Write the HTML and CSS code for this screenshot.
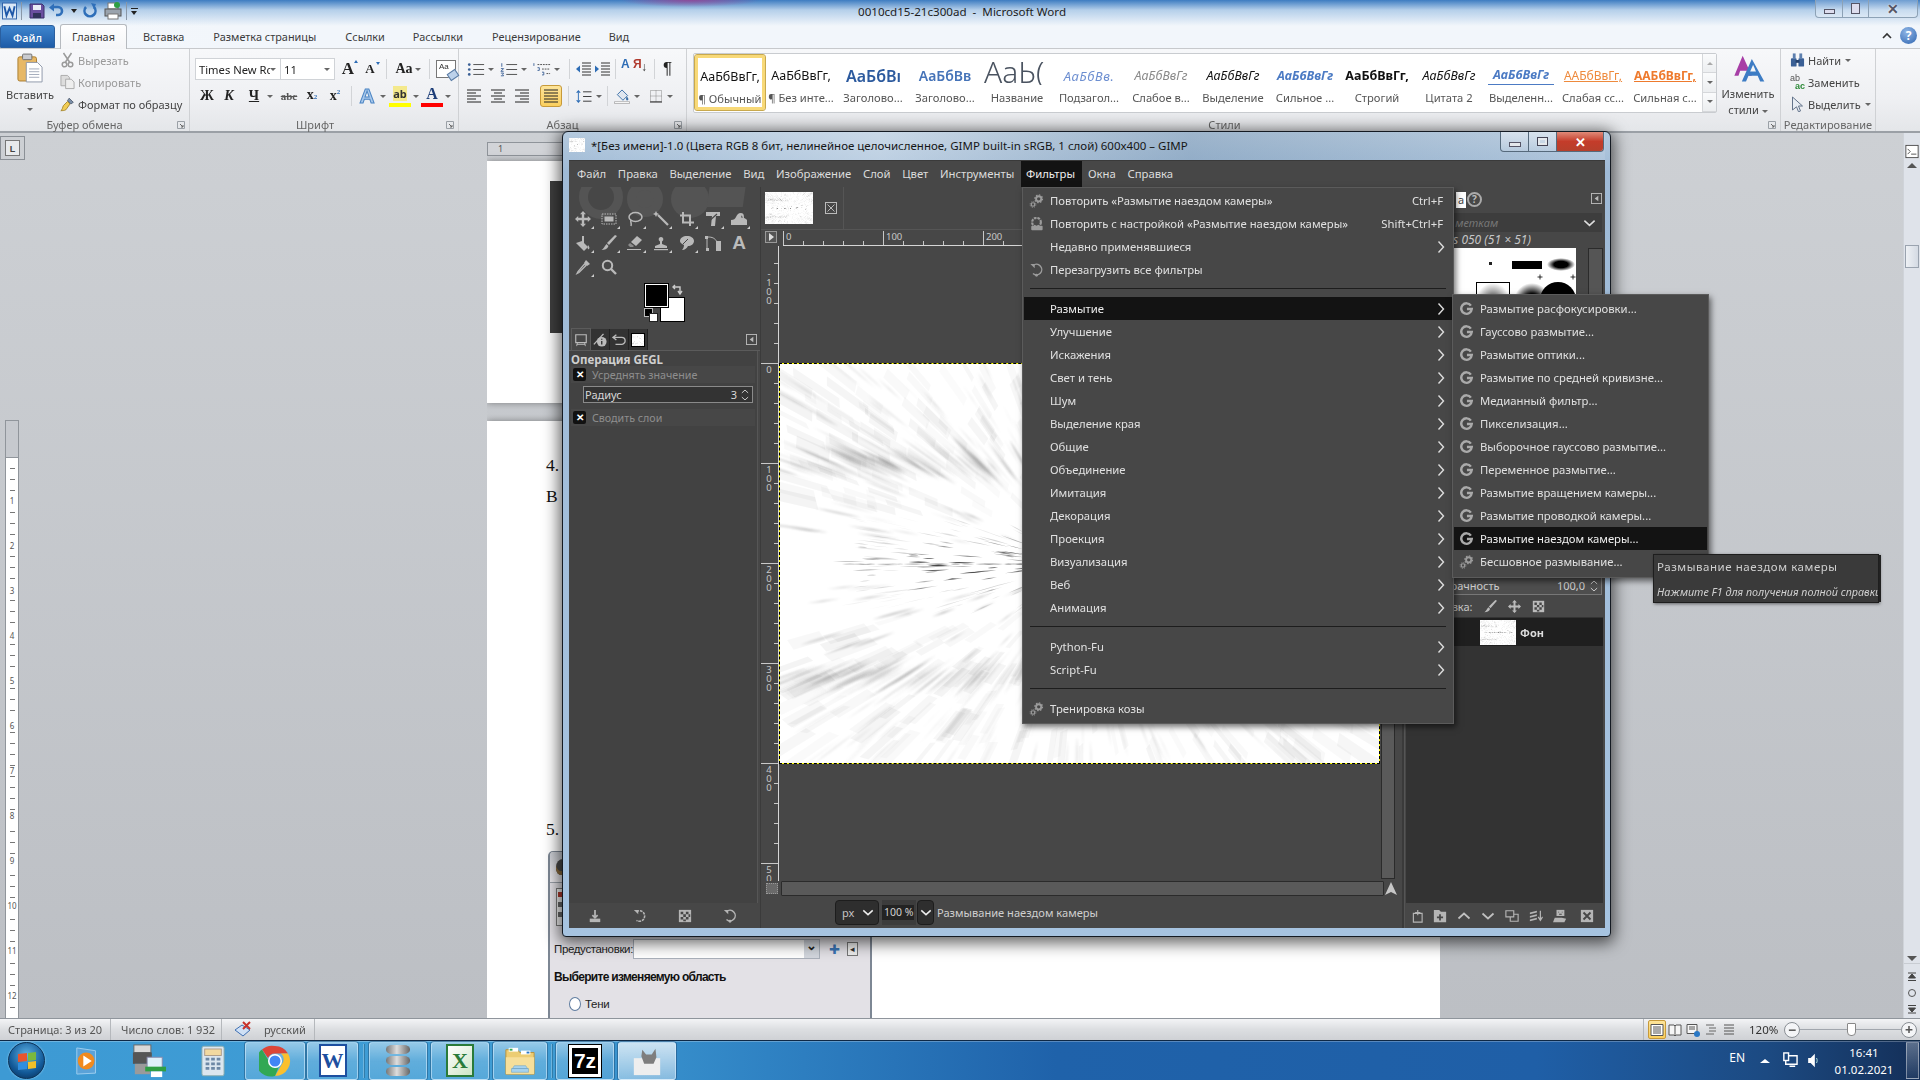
FILE: index.html
```html
<!DOCTYPE html>
<html lang="ru">
<head>
<meta charset="utf-8">
<title>GIMP поверх Microsoft Word</title>
<link rel="stylesheet" href="styles.css">
</head>
<body>
<svg class="defs" aria-hidden="true">
  <symbol id="i-move" viewBox="0 0 16 16"><path d="M8 0l3 3.2H9.2v3.6h3.6V5L16 8l-3.200 3V9.200H9.200v3.600H11L8 16l-3-3.200h1.800V9.200H3.200V11L0 8l3.200-3v1.800h3.600V3.200H5z"/></symbol>
  <symbol id="i-rect" viewBox="0 0 16 16"><rect x="1" y="3" width="14" height="10" fill="none" stroke="currentColor" stroke-dasharray="1.500 1"/><rect x="3.500" y="5.500" width="9" height="5"/></symbol>
  <symbol id="i-lasso" viewBox="0 0 16 16"><ellipse cx="8.500" cy="6" rx="6.500" ry="4.500" fill="none" stroke="currentColor" stroke-width="1.500"/><path d="M4 9c-1 2 1 3 0 6" fill="none" stroke="currentColor" stroke-width="1.500"/></symbol>
  <symbol id="i-wand" viewBox="0 0 16 16"><path d="M5 4l10 10" stroke="currentColor" stroke-width="2.200"/><path d="M3 0l1 2 2 1-2 1-1 2-1-2-2-1 2-1z"/></symbol>
  <symbol id="i-crop" viewBox="0 0 16 16"><path d="M4 1v10.500h11M1 4.500h10V15" fill="none" stroke="currentColor" stroke-width="2"/></symbol>
  <symbol id="i-trans" viewBox="0 0 16 16"><path d="M1 1h14v4h-4l-1 10H6L7 5H1z"/><path d="M2 12L12 3" stroke="#474747" stroke-width="1.200"/></symbol>
  <symbol id="i-warp" viewBox="0 0 16 16"><path d="M0 14V9c3 0 4-1 5-3s2-4 5-4 3 3 3 5c1 0 2 1 3 2v5z"/><path d="M10 5c1 0 1 1 1 2" stroke="#474747" fill="none"/></symbol>
  <symbol id="i-bucket" viewBox="0 0 16 16"><path d="M1 8l6-2 6 6-4 4z"/><path d="M7 1h2v7H7z"/><path d="M13 10c1 1 2 3 1 4s-2-1-1-4z"/></symbol>
  <symbol id="i-brush" viewBox="0 0 16 16"><path d="M14 0l2 1-8 9-2-2z"/><path d="M5.500 9l2 2c-1 3-4 4-7 4 2-1 3-4 5-6z"/></symbol>
  <symbol id="i-eraser" viewBox="0 0 16 16"><path d="M10 1l5 4-6 6-5-4z"/><path d="M3 8l4 3-1 1H3l-2-2z" opacity=".6"/><path d="M0 14h14v1H0z"/></symbol>
  <symbol id="i-clone" viewBox="0 0 16 16"><path d="M8 2a2.300 2.300 0 0 1 1 4.400V9l5 2v2H2v-2l5-2V6.400A2.300 2.300 0 0 1 8 2z"/><path d="M1 14h14v1.200H1z"/></symbol>
  <symbol id="i-heal" viewBox="0 0 16 16"><path d="M8 1c4 0 7 2 7 5s-3 5-6 5c-1 2-3 4-6 4 1-1 2-3 2-5C2 9 1 7 1 6c0-3 3-5 7-5z"/><path d="M4 9l5-5" stroke="#474747"/></symbol>
  <symbol id="i-path" viewBox="0 0 16 16"><rect x="0" y="1" width="3" height="3"/><rect x="1" y="13" width="3" height="3"/><rect x="11" y="6" width="5" height="10"/><path d="M2 4v9M3 2c4 0 7 1 9 5" fill="none" stroke="currentColor"/></symbol>
  <symbol id="i-picker" viewBox="0 0 16 16"><path d="M11 1l4 4-3 2-3-3z"/><path d="M9.500 5l1.500 1.500-7 7-2 1 1-2z" fill="none" stroke="currentColor" stroke-width="1.300"/></symbol>
  <symbol id="i-zoom" viewBox="0 0 16 16"><circle cx="6.500" cy="6.500" r="4.700" fill="none" stroke="currentColor" stroke-width="2"/><path d="M10 10l5 5" stroke="currentColor" stroke-width="2.400"/></symbol>
  <symbol id="i-g" viewBox="0 0 16 16"><path d="M13 4.200A6 6 0 1 0 14 8H8.500" fill="none" stroke="currentColor" stroke-width="2.800"/></symbol>
  <symbol id="i-gear" viewBox="0 0 16 16"><circle cx="10.500" cy="5.500" r="3" fill="none" stroke="currentColor" stroke-width="2.200"/><circle cx="10.500" cy="5.500" r="4.400" fill="none" stroke="currentColor" stroke-width="1.400" stroke-dasharray="1.700 1.700"/><circle cx="4" cy="12" r="2" fill="none" stroke="currentColor" stroke-width="1.400"/><circle cx="4" cy="12" r="3.300" fill="none" stroke="currentColor" stroke-width="1" stroke-dasharray="1.300 1.300"/></symbol>
  <symbol id="i-repeat" viewBox="0 0 16 16"><circle cx="8" cy="6" r="5" fill="none" stroke="currentColor" stroke-width="2.500" stroke-dasharray="3 1"/><rect x="2" y="10" width="13" height="5" rx="1"/></symbol>
  <symbol id="i-reload" viewBox="0 0 16 16"><path d="M4 3a6 6 0 1 1 0 9" fill="none" stroke="currentColor" stroke-width="1.700"/><path d="M1 1h5v5z"/><circle cx="8" cy="14" r="1.600"/></symbol>
  <symbol id="i-chev" viewBox="0 0 8 14"><path d="M1.500 1.500L6.500 7l-5 5.500" fill="none" stroke="currentColor" stroke-width="1.400"/></symbol>
  <symbol id="i-down" viewBox="0 0 14 8"><path d="M1.500 1.500L7 6.500l5.500-5" fill="none" stroke="currentColor" stroke-width="1.700"/></symbol>
  <symbol id="i-up" viewBox="0 0 14 8"><path d="M1.500 6.500L7 1.500l5.500 5" fill="none" stroke="currentColor" stroke-width="1.700"/></symbol>
  <symbol id="i-paste" viewBox="0 0 28 32"><rect x="1" y="4" width="20" height="26" rx="2" fill="#e7b866" stroke="#a87a2c"/><rect x="6" y="1" width="10" height="6" rx="1" fill="#c9cbd0" stroke="#6e6e6e"/><path d="M10 10h12l5 5v16H10z" fill="#fff" stroke="#8a94a6"/><path d="M13 17h11M13 20h11M13 23h11M13 26h11" stroke="#9fa8b8"/></symbol>
  <symbol id="i-sci" viewBox="0 0 14 16"><path d="M3 1l6 9M11 1L5 10" stroke="#9a9a9a" stroke-width="1.500"/><circle cx="4" cy="12.500" r="2.300" fill="none" stroke="#9a9a9a" stroke-width="1.500"/><circle cx="10" cy="12.500" r="2.300" fill="none" stroke="#9a9a9a" stroke-width="1.500"/></symbol>
  <symbol id="i-copy" viewBox="0 0 16 16"><path d="M1 1h7l2 2v9H1z" fill="#ddd" stroke="#aaa"/><path d="M6 5h6l3 3v7H6z" fill="#eee" stroke="#aaa"/></symbol>
  <symbol id="i-fmt" viewBox="0 0 18 18"><path d="M11 2l5 5-3 2-4-4z" fill="#7a8ea8" stroke="#4d5a6d"/><path d="M9 6l3 3-5 7c-2 1-4 1-6 1 2-1 2-4 3-6z" fill="#f0cc55" stroke="#a07e20"/></symbol>
  <symbol id="i-list" viewBox="0 0 20 16"><circle cx="2.500" cy="2.500" r="1.500" fill="#3a5f95"/><circle cx="2.500" cy="8" r="1.500" fill="#3a5f95"/><circle cx="2.500" cy="13.500" r="1.500" fill="#3a5f95"/><path d="M7 2.500h12M7 8h12M7 13.500h12" stroke="#444"/></symbol>
  <symbol id="i-num" viewBox="0 0 20 16"><path d="M2 1v4M1 7h3l-3 3h3M1 12h3l-1 1.500 1 1.500H1" stroke="#3a5f95" fill="none"/><path d="M7 2.500h12M7 8h12M7 13.500h12" stroke="#444"/></symbol>
  <symbol id="i-multi" viewBox="0 0 20 16"><path d="M1 1v3M5 6h2v3H5M10 11h2v3h-2" stroke="#3a5f95" fill="none"/><path d="M5 2.500h14M10 7.500h9M15 12.500h4" stroke="#444" stroke-dasharray="2 1"/></symbol>
  <symbol id="i-outd" viewBox="0 0 16 14"><path d="M7 1h9M7 4h9M7 7h9M7 10h9M7 13h9" stroke="#333"/><path d="M1 7l4-3.500v7z" fill="#2d6cb5"/></symbol>
  <symbol id="i-ind" viewBox="0 0 16 14"><path d="M7 1h9M7 4h9M7 7h9M7 10h9M7 13h9" stroke="#333"/><path d="M5 7L1 3.500v7z" fill="#2d6cb5"/></symbol>
  <symbol id="i-al" viewBox="0 0 16 14"><path d="M1 1h14M1 4h9M1 7h14M1 10h9M1 13h14" stroke="#222"/></symbol>
  <symbol id="i-ac" viewBox="0 0 16 14"><path d="M1 1h14M4 4h8M1 7h14M4 10h8M1 13h14" stroke="#222"/></symbol>
  <symbol id="i-ar" viewBox="0 0 16 14"><path d="M1 1h14M6 4h9M1 7h14M6 10h9M1 13h14" stroke="#222"/></symbol>
  <symbol id="i-aj" viewBox="0 0 16 14"><path d="M1 1h14M1 4h14M1 7h14M1 10h14M1 13h14" stroke="#222"/></symbol>
  <symbol id="i-spacing" viewBox="0 0 18 16"><path d="M3 1l2.500 3h-5zM3 15L.500 12h5z" fill="#2d6cb5"/><path d="M3 4v8" stroke="#2d6cb5"/><path d="M8 3h9M8 8h9M8 13h9" stroke="#333"/></symbol>
  <symbol id="i-shade" viewBox="0 0 18 16"><path d="M9 1l6 6-5 5-6-6z" fill="#dfe6ef" stroke="#3a6ea5"/><path d="M14 8c1 1 3 3 1 4s-2-2-1-4z" fill="#3a6ea5"/><path d="M1 13.500h16v2H1z" fill="#fff" stroke="#888" stroke-width=".6"/></symbol>
  <symbol id="i-border" viewBox="0 0 14 14"><path d="M1.500 1.500h11v11h-11zM7 1.500v11M1.500 7h11" fill="none" stroke="#888" stroke-dasharray="1 1"/><path d="M1 13h12" stroke="#222"/></symbol>
  <symbol id="i-launch" viewBox="0 0 8 8"><path d="M.500.500h7v7h-7z" fill="none" stroke="#9aa0a6"/><path d="M3 3l3 3M6 4v2H4" stroke="#666" fill="none"/></symbol>
  <symbol id="i-bino" viewBox="0 0 16 16"><rect x="1" y="6" width="6" height="9" rx="1" fill="#3a5f95"/><rect x="9" y="6" width="6" height="9" rx="1" fill="#3a5f95"/><rect x="3" y="1" width="3" height="6" fill="#5d7fae"/><rect x="10" y="1" width="3" height="6" fill="#5d7fae"/><path d="M6 8h4v3H6z" fill="#24416d"/></symbol>
  <symbol id="i-cursor" viewBox="0 0 12 16"><path d="M1 1l10 9H7l2 5-2 .8-2-5-4 3.200z" fill="#e8edf4" stroke="#64748b"/></symbol>
  <symbol id="i-aa" viewBox="0 0 36 36"><path d="M11 2L1 26h5l2-6h8l2 6h4z" fill="#a73ea6"/><path d="M22 6L10 33h5l3-7h11l3 7h5z" fill="#3d7cc4"/><path d="M20 21l3.500-8 3.500 8z" fill="#f3f5f7"/></symbol>
  <symbol id="i-grip" viewBox="0 0 16 16"><rect x="1" y="1" width="14" height="14" fill="#fff" stroke="#444"/><path d="M3 5l3 3-3 3M7 11h6" stroke="#444" fill="none"/></symbol>
  <symbol id="i-pin" viewBox="0 0 12 12"><rect x=".500" y=".500" width="11" height="11" fill="none" stroke="#bbb"/><path d="M8 3v6L4 6z" fill="#bbb"/></symbol>
  <symbol id="i-export" viewBox="0 0 16 16"><path d="M8 1v9M5 7l3 3 3-3" stroke="currentColor" fill="none" stroke-width="2"/><path d="M2 11h12v4H2z"/></symbol>
  <symbol id="i-undo" viewBox="0 0 16 16"><path d="M4 3a6 6 0 1 1 0 10" fill="none" stroke="currentColor" stroke-width="1.800" stroke-dasharray="3 1"/><path d="M1 1h5v5z"/></symbol>
  <symbol id="i-checker" viewBox="0 0 16 16"><path d="M1 1h14v14H1z"/><path d="M3 3h3v3H3zM9 3h3v3H9zM6 6h3v3H6zM12 6h2v3h-2zM3 9h3v3H3zM9 9h3v3H9zM6 12h3v2H6z" fill="#474747"/></symbol>
  <symbol id="i-new" viewBox="0 0 16 16"><path d="M5 5h10v10H5zM10 1v6M7 4h6" fill="none" stroke="currentColor" stroke-width="1.300"/></symbol>
  <symbol id="i-folder" viewBox="0 0 16 16"><path d="M1 1h6l2 2h6v12H1z"/><path d="M8 6v7M4.500 9.500h7" stroke="#474747" stroke-width="2"/></symbol>
  <symbol id="i-dup" viewBox="0 0 16 16"><path d="M1 2h9v7H1zM6 9v5h9V6h-5" fill="none" stroke="currentColor" stroke-width="1.300"/></symbol>
  <symbol id="i-merge" viewBox="0 0 16 16"><path d="M1 4l8-2v2l-8 2zM1 8l8-2v2l-8 2zM1 12l8-2v2l-8 2z"/><path d="M13 2v10M10.500 9l2.500 4 2.500-4" fill="none" stroke="currentColor" stroke-width="1.400"/></symbol>
  <symbol id="i-mask" viewBox="0 0 16 16"><path d="M4 1h9v7H4z"/><path d="M6 3h1v1H6zM10 3h1v1h-1zM7 5.500h3v1H7z" fill="#474747"/><path d="M2 10h8l5 1-2 4H0z"/></symbol>
  <symbol id="i-x" viewBox="0 0 16 16"><path d="M1 1h14v14H1z"/><path d="M4 4l8 8M12 4l-8 8" stroke="#474747" stroke-width="2.200"/></symbol>
  <symbol id="i-close" viewBox="0 0 12 12"><rect x=".500" y=".500" width="11" height="11" fill="none" stroke="#bbb"/><path d="M2.500 2.500l7 7M9.500 2.500l-7 7" stroke="#bbb"/></symbol>
  <symbol id="i-tv" viewBox="0 0 16 16"><path d="M2 2h12v9H2z" fill="none" stroke="currentColor" stroke-width="1.300"/><path d="M4 11l-1 4M12 11l1 4M3 13h10" stroke="currentColor"/></symbol>
  <symbol id="i-info" viewBox="0 0 16 16"><path d="M1 13L12 1" stroke="currentColor" stroke-width="1.500"/><circle cx="10" cy="10" r="5.500"/><path d="M10 6.500v1.300M10 9v4" stroke="#2e2e2e" stroke-width="1.500"/></symbol>
  <symbol id="i-hist" viewBox="0 0 16 16"><path d="M5 2L1 5l4 3M1 5h10c3 0 4 2 4 4s-2 4-4 4H4" fill="none" stroke="currentColor" stroke-width="1.500"/></symbol>
  <symbol id="i-star" viewBox="0 0 12 12"><path d="M6 1v10M1 6h10" stroke="#000" stroke-width="1.600"/></symbol>
  <symbol id="i-first" viewBox="0 0 10 10"><path d="M1 1h8M5 2L1.500 6h7zM1 8.500h8" stroke="#444" fill="#444"/></symbol>
  <symbol id="i-last" viewBox="0 0 10 10"><path d="M1 1.500h8M5 8L1.500 4h7zM1 9h8" stroke="#444" fill="#444"/></symbol>
</svg>

<div class="word">
  <header class="w-top">
    <div class="qat-row">
      <div class="qat">
        <svg class="qi qi-w" viewBox="0 0 16 18"><rect x=".5" y=".5" width="15" height="17" fill="#d9e7f6" stroke="#2a5fa8"/><path d="M2.500 4l2.300 10 3.200-8 3.200 8L13.500 4" fill="none" stroke="#1d57a8" stroke-width="2"/></svg>
        <i class="qsep"></i>
        <svg class="qi qi-save" viewBox="0 0 16 16"><path d="M1 1h12l2 2v12H1z" fill="#6a4fa0" stroke="#39306b"/><rect x="4" y="2" width="8" height="5" fill="#e9edf6"/><rect x="4" y="10" width="8" height="5" fill="#31335c"/></svg>
        <svg class="qi qi-undo" viewBox="0 0 16 16"><path d="M4 4h6a4 4 0 0 1 0 8H8" fill="none" stroke="#2f6fb9" stroke-width="2.600"/><path d="M1 4.500l5-4v8z" fill="#2f6fb9"/></svg>
        <span class="qarr"></span>
        <svg class="qi qi-redo" viewBox="0 0 16 16"><path d="M4 4a5.500 5.500 0 1 0 8 0" fill="none" stroke="#2f6fb9" stroke-width="2.600"/><path d="M9 0l5 1-2 5z" fill="#2f6fb9"/></svg>
        <svg class="qi qi-print" viewBox="0 0 18 18"><rect x="4" y="1" width="10" height="6" fill="#fff" stroke="#777"/><rect x="1" y="7" width="16" height="7" fill="#9aa3ad" stroke="#555"/><rect x="4" y="12" width="10" height="5" fill="#fff" stroke="#777"/><circle cx="13" cy="3" r="3" fill="#2f9e44"/></svg>
        <i class="qsep qsep-2"></i>
        <span class="qcustom"></span>
      </div>
      <div class="w-title">0010cd15-21c300ad&nbsp; - &nbsp;Microsoft Word</div>
      <div class="w-ctrl">
        <span class="wc wc-min"><i></i></span>
        <span class="wc wc-max"><i></i></span>
        <span class="wc wc-close">✕</span>
      </div>
    </div>
    <nav class="tabs">
      <span class="tab-file">Файл</span>
      <span class="tab-active">Главная</span>
      <span class="tab t1">Вставка</span>
      <span class="tab t2">Разметка страницы</span>
      <span class="tab t3">Ссылки</span>
      <span class="tab t4">Рассылки</span>
      <span class="tab t5">Рецензирование</span>
      <span class="tab t6">Вид</span>
      <span class="tab-right"><svg class="ribbon-up" viewBox="0 0 10 7"><path d="M1 6l4-4 4 4" fill="none" stroke="#333" stroke-width="1.600"/></svg><span class="help">?</span></span>
    </nav>
  </header>

  <section class="ribbon">
    <div class="rg rg-clip">
      <div class="rg-body clip-body">
        <div class="paste">
          <svg class="paste-i"><use href="#i-paste"/></svg>
          <span>Вставить</span>
          <b class="tri"></b>
        </div>
        <ul class="clip-list">
          <li class="dis"><svg class="ci"><use href="#i-sci"/></svg>Вырезать</li>
          <li class="dis"><svg class="ci"><use href="#i-copy"/></svg>Копировать</li>
          <li><svg class="ci"><use href="#i-fmt"/></svg>Формат по образцу</li>
        </ul>
      </div>
      <div class="rg-label lb-clip">Буфер обмена<svg class="launch"><use href="#i-launch"/></svg></div>
    </div>

    <div class="rg rg-font">
      <div class="rg-body two-rows">
        <div class="rrow font-r1">
          <div class="combo combo-font"><span>Times New Rc</span><b class="tri"></b></div>
          <div class="combo combo-size"><span>11</span><b class="tri"></b></div>
          <span class="fbtn big fb-grow">A<sup class="up-t"></sup></span>
          <span class="fbtn sm">A<sup class="dn-t"></sup></span>
          <i class="vs"></i>
          <span class="fbtn aa">Aa<b class="tri"></b></span>
          <i class="vs"></i>
          <span class="clr"><span class="clr-t">Aa</span><i class="clr-e"></i></span>
        </div>
        <div class="rrow font-r2">
          <span class="fs f-b">Ж</span>
          <span class="fs f-i">К</span>
          <span class="fs f-u">Ч</span><b class="tri"></b>
          <span class="fs f-st">abc</span>
          <span class="fs f-sb">x<small>2</small></span>
          <span class="fs f-sp">x<sup>2</sup></span>
          <i class="vs vs2"></i>
          <span class="fs f-eff">A</span><b class="tri"></b>
          <span class="fs f-hl"><em>ab</em></span><b class="tri"></b>
          <span class="fs f-col">A</span><b class="tri"></b>
        </div>
      </div>
      <div class="rg-label lb-font">Шрифт<svg class="launch"><use href="#i-launch"/></svg></div>
    </div>

    <div class="rg rg-para">
      <div class="rg-body two-rows">
        <div class="rrow para-r1">
          <svg class="ic17"><use href="#i-list"/></svg><b class="tri"></b>
          <svg class="ic17"><use href="#i-num"/></svg><b class="tri"></b>
          <svg class="ic17"><use href="#i-multi"/></svg><b class="tri"></b>
          <i class="vs"></i>
          <svg class="ic15"><use href="#i-outd"/></svg>
          <svg class="ic15"><use href="#i-ind"/></svg>
          <i class="vs"></i>
          <span class="sort"><em>А</em><em class="ya">Я</em><b>↓</b></span>
          <i class="vs"></i>
          <span class="pilcrow">¶</span>
        </div>
        <div class="rrow para-r2">
          <svg class="ic15"><use href="#i-al"/></svg>
          <svg class="ic15"><use href="#i-ac"/></svg>
          <svg class="ic15"><use href="#i-ar"/></svg>
          <span class="aj-on"><svg class="ic15"><use href="#i-aj"/></svg></span>
          <i class="vs"></i>
          <svg class="ic17"><use href="#i-spacing"/></svg><b class="tri"></b>
          <i class="vs vs3"></i>
          <svg class="ic17"><use href="#i-shade"/></svg><b class="tri"></b>
          <svg class="ic15"><use href="#i-border"/></svg><b class="tri"></b>
        </div>
      </div>
      <div class="rg-label lb-para">Абзац<svg class="launch"><use href="#i-launch"/></svg></div>
    </div>

    <div class="rg rg-styles">
      <div class="rg-body styles-body">
        <div class="gallery">
          <div class="st st-on"><span class="sv">АаБбВвГг,</span><span class="sl">¶ Обычный</span></div>
          <div class="st"><span class="sv">АаБбВвГг,</span><span class="sl">¶ Без инте...</span></div>
          <div class="st"><span class="sv sv-h1">АаБбВı</span><span class="sl">Заголово...</span></div>
          <div class="st"><span class="sv sv-h2">АаБбВв</span><span class="sl">Заголово...</span></div>
          <div class="st"><span class="sv sv-t">АаЬ(</span><span class="sl">Название</span></div>
          <div class="st"><span class="sv sv-sub">АаБбВв.</span><span class="sl">Подзагол...</span></div>
          <div class="st"><span class="sv sv-wk">АаБбВвГг</span><span class="sl">Слабое в...</span></div>
          <div class="st"><span class="sv sv-em">АаБбВвГг</span><span class="sl">Выделение</span></div>
          <div class="st"><span class="sv sv-str">АаБбВвГг</span><span class="sl">Сильное ...</span></div>
          <div class="st"><span class="sv sv-bold">АаБбВвГг,</span><span class="sl">Строгий</span></div>
          <div class="st"><span class="sv sv-em">АаБбВвГг</span><span class="sl">Цитата 2</span></div>
          <div class="st"><span class="sv sv-int">АаБбВвГг</span><span class="sl">Выделенн...</span></div>
          <div class="st"><span class="sv sv-ref">ААБбВвГг,</span><span class="sl">Слабая сс...</span></div>
          <div class="st"><span class="sv sv-ref2">ААБбВвГг,</span><span class="sl">Сильная с...</span></div>
          <div class="gscroll"><span><b class="tri tri-up"></b></span><span><b class="tri"></b></span><span><b class="tri tri-more"></b></span></div>
        </div>
        <div class="chg">
          <svg class="chg-i"><use href="#i-aa"/></svg>
          <span>Изменить</span>
          <span>стили <b class="tri"></b></span>
        </div>
      </div>
      <div class="rg-label rg-label-styles">Стили<svg class="launch"><use href="#i-launch"/></svg></div>
    </div>

    <div class="rg rg-edit">
      <div class="rg-body">
        <ul class="edit-list">
          <li><svg class="ci"><use href="#i-bino"/></svg>Найти <b class="tri"></b></li>
          <li><span class="abac"><em>ab</em><em class="ac">ac</em></span>Заменить</li>
          <li><svg class="ci"><use href="#i-cursor"/></svg>Выделить <b class="tri"></b></li>
        </ul>
      </div>
      <div class="rg-label">Редактирование</div>
    </div>
  </section>

  <main class="doc">
    <div class="doc-left">
      <div class="corner"><span>L</span></div>
      <div class="vruler-w">
        <div class="vr-gray"></div>
        <div class="vr-white">
          <span>1</span><span>2</span><span>3</span><span>4</span><span>5</span><span>6</span><span>7</span><span>8</span><span>9</span><span>10</span><span>11</span><span>12</span>
        </div>
      </div>
    </div>
    <div class="doc-pages">
      <div class="hruler-w"><span>1</span></div>
      <div class="page page1">
        <p class="letter clipped">В</p>
        <div class="doc-shot"></div>
      </div>
      <div class="page page2">
        <p class="letter">4.</p>
        <p class="letter">В</p>
        <p class="letter l5">5.</p>
        <div class="dlg">
          <div class="dlg-head"><span class="dlg-wilber"></span></div>
          <div class="dlg-tool"><i></i><i></i><i></i></div>
          <div class="dlg-row">
            <span class="dlg-lbl">Предустановки:</span>
            <span class="dlg-combo"><b>⌄</b></span>
            <span class="dlg-plus">✚</span>
            <span class="dlg-pin">◂</span>
          </div>
          <div class="dlg-h">Выберите изменяемую область</div>
          <div class="dlg-radio"><i></i>Тени</div>
        </div>
      </div>
    </div>
    <div class="doc-scroll">
      <svg class="ds-grip"><use href="#i-grip"/></svg>
      <b class="ds-up"></b>
      <div class="ds-track"><span class="ds-thumb"></span></div>
      <b class="ds-down"></b>
      <div class="ds-nav"><svg><use href="#i-first"/></svg><span class="ds-o"></span><svg><use href="#i-last"/></svg></div>
    </div>
  </main>

  <footer class="status">
    <span class="s1">Страница: 3 из 20</span>
    <span class="s2">Число слов: 1 932</span>
    <span class="s3"><svg class="proof" viewBox="0 0 18 18"><path d="M1 9l7-5 8 5-7 6z" fill="#cfe0f5" stroke="#3e6fb3"/><path d="M9 1l7 7M16 1L9 8" stroke="#c8322b" stroke-width="2"/></svg></span>
    <span class="s4">русский</span>
    <span class="s-right">
      <span class="vw vw-on"><svg class="vwi" viewBox="0 0 14 14"><path d="M1 1.500h12v11H1z" fill="#fff" stroke="#555"/><path d="M3 4h8M3 6h8M3 8h8M3 10h8" stroke="#555"/></svg></span>
      <span class="vw"><svg class="vwi" viewBox="0 0 14 14"><path d="M1 2h5l1 1 1-1h5v10H8l-1 1-1-1H1z" fill="#f6f6f6" stroke="#555"/><path d="M7 3v10" stroke="#555"/></svg></span>
      <span class="vw"><svg class="vwi" viewBox="0 0 14 14"><path d="M1 1.500h10v9H1z" fill="#f6f6f6" stroke="#555"/><path d="M3 4h6M3 6h6" stroke="#555"/><circle cx="11" cy="11" r="3" fill="#2a78c5"/></svg></span>
      <span class="vw"><svg class="vwi" viewBox="0 0 14 14"><path d="M2 2h8M5 5h7M5 8h7M2 11h8" stroke="#666"/></svg></span>
      <span class="vw"><svg class="vwi" viewBox="0 0 14 14"><path d="M2 2h10M2 5h10M2 8h10M2 11h10" stroke="#555"/></svg></span>
      <span class="zoom-pc">120%</span>
      <span class="zb">−</span>
      <span class="zslider"><i></i></span>
      <span class="zb">+</span>
    </span>
  </footer>

  <footer class="taskbar">
    <div class="orb"><span class="flag"><i></i><i></i><i></i><i></i></span></div>
    <svg class="tk tk-media" viewBox="0 0 30 34"><path d="M3 3l20 3v24L3 31z" fill="#5aa2d8" stroke="#9fd0f0"/><circle cx="13" cy="17" r="9" fill="#f08a1f"/><path d="M10 11l9 6-9 6z" fill="#fff"/></svg>
    <svg class="tk tk-print" viewBox="0 0 36 36"><rect x="2" y="1" width="18" height="8" fill="#d8d8d8" stroke="#666"/><rect x="1" y="9" width="20" height="12" fill="#555"/><rect x="3" y="21" width="16" height="11" fill="#9a9a9a"/><rect x="16" y="14" width="16" height="11" fill="#dff0fa" stroke="#88a"/><path d="M14 24h22v5H14z" fill="#2f9e44"/><rect x="20" y="29" width="12" height="6" fill="#fff"/></svg>
    <svg class="tk tk-calc" viewBox="0 0 26 34"><rect x="1" y="1" width="24" height="32" rx="2" fill="#dbe6ef" stroke="#8aa"/><rect x="4" y="4" width="18" height="7" fill="#f2d9a0" stroke="#a98"/><path d="M5 15h4M11 15h4M17 15h4M5 20h4M11 20h4M17 20h4M5 25h4M11 25h4M17 25h4" stroke="#6d88a5" stroke-width="3"/></svg>
    <div class="tbtn b-chrome"><svg class="tk-in" viewBox="0 0 32 32"><path d="M16 1a15 15 0 0 1 13 7.500H16A7.500 7.500 0 0 0 9 13L3 4.500A15 15 0 0 1 16 1z" fill="#dc4537"/><path d="M29 8.500A15 15 0 0 1 16 31l7-12a7.500 7.500 0 0 0-1-10.500z" fill="#fbc02d"/><path d="M3 4.500l6.500 11a7.500 7.500 0 0 0 10 7L16 31A15 15 0 0 1 3 4.500z" fill="#31a853"/><circle cx="16" cy="16" r="7" fill="#fff"/><circle cx="16" cy="16" r="5.500" fill="#4285f4"/></svg></div>
    <div class="tbtn b-word"><span class="doc-ico"><b>W</b></span></div>
    <i class="tgap"></i>
    <div class="tbtn b-db"><span class="cyl"><i></i><i></i><i></i></span></div>
    <div class="tbtn b-xl"><span class="doc-ico xl"><b>X</b></span></div>
    <div class="tbtn b-fold"><svg class="tk-in" viewBox="0 0 34 32"><path d="M2 4h12l3 3h15v23H2z" fill="#eccd73" stroke="#b8913a"/><rect x="5" y="2" width="10" height="4" fill="#fff"/><rect x="6" y="3" width="3" height="2" fill="#36a852"/><rect x="18" y="5" width="10" height="4" fill="#fff"/><rect x="24" y="6" width="3" height="2" fill="#2a78c5"/><path d="M2 12h30v18H2z" fill="#f6df9a"/><path d="M8 24h18v4H8zM11 21h12l2 3H9z" fill="#a6d3ee" stroke="#6da2c5" stroke-width=".6"/></svg></div>
    <i class="tgap tgap2"></i>
    <div class="tbtn b-7z"><span class="z7">7z</span></div>
    <div class="tbtn b-gimp"><svg class="tk-in" viewBox="0 0 34 32"><rect x="3" y="13" width="28" height="18" fill="#eee"/><path d="M12 4l4 5 6 0 4-6 1 9-3 7H14l-3-8z" fill="#7e7e7e"/></svg></div>
    <div class="tray">
      <span class="t-en">EN</span>
      <span class="t-arr"></span>
      <svg class="t-net" viewBox="0 0 18 18"><rect x="3" y="1" width="5" height="8" fill="none" stroke="#fff" stroke-width="1.500"/><path d="M8 4h9v9H5V9M9 15h6" fill="none" stroke="#fff" stroke-width="1.500"/></svg>
      <svg class="t-vol" viewBox="0 0 16 18"><path d="M1 6h3l5-5v16l-5-5H1z" fill="#fff"/><path d="M11 6c1 2 1 4 0 6" stroke="#cfe" fill="none"/></svg>
      <span class="t-clock"><b>16:41</b><b>01.02.2021</b></span>
      <span class="t-show"></span>
    </div>
  </footer>
</div>

<div class="gimp">
  <div class="g-title">
    <canvas class="thumb thumb-title" width="16" height="14"></canvas>
    <span class="g-title-t">*[Без имени]-1.0 (Цвета RGB 8 бит, нелинейное целочисленное, GIMP built-in sRGB, 1 слой) 600x400 – GIMP</span>
    <span class="g-ctrl"><span class="gc"><i class="gc-min"></i></span><span class="gc"><i class="gc-max"></i></span><span class="gc gc-x">✕</span></span>
  </div>
  <div class="g-inner">
    <div class="g-menubar">
      <span class="m1">Файл</span><span>Правка</span><span>Выделение</span><span>Вид</span><span>Изображение</span><span>Слой</span><span>Цвет</span><span>Инструменты</span><span class="m-on">Фильтры</span><span>Окна</span><span>Справка</span>
    </div>
    <div class="g-body">
      <aside class="g-left">
        <div class="toolbox">
          <div class="wilber"><i class="w1"></i><i class="w2"></i><i class="w3"></i><i class="w4"></i></div>
          <div class="tools">
            <span class="tool"><svg><use href="#i-move"/></svg></span>
            <span class="tool"><svg><use href="#i-rect"/></svg></span>
            <span class="tool"><svg><use href="#i-lasso"/></svg></span>
            <span class="tool"><svg><use href="#i-wand"/></svg></span>
            <span class="tool"><svg><use href="#i-crop"/></svg></span>
            <span class="tool"><svg><use href="#i-trans"/></svg></span>
            <span class="tool"><svg><use href="#i-warp"/></svg></span>
            <span class="tool"><svg><use href="#i-bucket"/></svg></span>
            <span class="tool"><svg><use href="#i-brush"/></svg></span>
            <span class="tool"><svg><use href="#i-eraser"/></svg></span>
            <span class="tool"><svg><use href="#i-clone"/></svg></span>
            <span class="tool"><svg><use href="#i-heal"/></svg></span>
            <span class="tool notri"><svg><use href="#i-path"/></svg></span>
            <span class="tool notri tool-a">A</span>
            <span class="tool"><svg><use href="#i-picker"/></svg></span>
            <span class="tool notri"><svg><use href="#i-zoom"/></svg></span>
          </div>
          <div class="swatches">
            <i class="sw-bg"></i><i class="sw-fg"></i><i class="sw-d1"></i><i class="sw-d2"></i>
            <svg class="sw-swap" viewBox="0 0 12 12"><path d="M1 3h7v6M6 7l2 3 2-3M3 1L1 3l2 2" fill="none" stroke="#ccc" stroke-width="1.400"/></svg>
          </div>
        </div>
        <div class="dock-tabs">
          <span class="dt dt-on"><svg><use href="#i-tv"/></svg></span>
          <span class="dt"><svg><use href="#i-info"/></svg></span>
          <span class="dt"><svg><use href="#i-hist"/></svg></span>
          <span class="dt"><canvas class="thumb thumb-tab" width="12" height="12"></canvas></span>
          <svg class="dt-pin"><use href="#i-pin"/></svg>
        </div>
        <div class="gegl">
          <div class="gegl-h">Операция GEGL</div>
          <div class="gegl-chk"><i>✕</i>Усреднять значение</div>
          <div class="gegl-field"><span>Радиус</span><span class="gv">3</span><span class="spin"><svg><use href="#i-up"/></svg><svg><use href="#i-down"/></svg></span></div>
          <div class="gegl-chk gc2"><i>✕</i>Сводить слои</div>
        </div>
        <div class="dock-foot df-left">
          <svg><use href="#i-export"/></svg><svg><use href="#i-undo"/></svg><svg><use href="#i-checker"/></svg><svg><use href="#i-reload"/></svg>
        </div>
      </aside>

      <section class="g-center">
        <div class="img-tabs">
          <div class="img-tab"><canvas class="thumb thumb-img" width="48" height="32"></canvas><svg class="img-x"><use href="#i-close"/></svg></div>
        </div>
        <div class="hruler">
          <span class="origin"></span>
          <div class="hr-cells"><span>0</span><span>100</span><span>200</span><span>300</span><span>400</span><span>500</span><span>600</span></div>
        </div>
        <div class="mid">
          <div class="vruler">
            <div class="vr-cell vr-neg"><span>-</span><span>1</span><span>0</span><span>0</span></div>
            <div class="vr-cell"><span>0</span></div>
            <div class="vr-cell"><span>1</span><span>0</span><span>0</span></div>
            <div class="vr-cell"><span>2</span><span>0</span><span>0</span></div>
            <div class="vr-cell"><span>3</span><span>0</span><span>0</span></div>
            <div class="vr-cell"><span>4</span><span>0</span><span>0</span></div>
            <div class="vr-cell vr-end"><span>5</span><span>0</span></div>
          </div>
          <div class="viewport"><div class="ants"><canvas id="blur" width="600" height="400"></canvas></div></div>
          <div class="vbar"></div>
        </div>
        <div class="hbar"><i class="corner-q"></i><span class="hbar-t"></span><svg class="nav-tri" viewBox="0 0 12 13"><path d="M6 0l6 13-6-3-6 3z"/></svg></div>
        <div class="g-status">
          <span class="cb cb-px">px<svg><use href="#i-down"/></svg></span>
          <span class="cb-zoom"><b>100 %</b></span>
          <span class="cb cb-z"><svg><use href="#i-down"/></svg></span>
          <span class="g-msg">Размывание наездом камеры</span>
        </div>
      </section>

      <aside class="g-right">
        <div class="rd-tabs"><span class="rd-tab">а</span><span class="rd-help">?</span><svg class="dt-pin"><use href="#i-pin"/></svg></div>
        <div class="rd-filter"><em>по меткам</em><svg><use href="#i-down"/></svg></div>
        <div class="rd-name"><em>Gauss 050 (51 × 51)</em></div>
        <div class="rd-brushes">
          <div class="brush-grid">
            <i class="br-dot"></i><i class="br-bar"></i><i class="br-ell"></i>
            <i class="br-sel"></i><i class="br-mid"></i><i class="br-big"></i>
            <svg class="br-p1"><use href="#i-star"/></svg><svg class="br-p2"><use href="#i-star"/></svg>
          </div>
          <div class="brush-sb"></div>
        </div>
        <div class="rd-op"><div class="op-bar"><span>Непрозрачность</span><span class="op-v">100,0</span><span class="spin"><svg><use href="#i-up"/></svg><svg><use href="#i-down"/></svg></span></div></div>
        <div class="rd-lock"><span>Блокировка:</span><svg><use href="#i-brush"/></svg><svg><use href="#i-move"/></svg><svg><use href="#i-checker"/></svg></div>
        <div class="rd-layers">
          <div class="layer"><canvas class="thumb thumb-layer" width="36" height="25"></canvas><b>Фон</b></div>
        </div>
        <div class="dock-foot df-right">
          <svg><use href="#i-new"/></svg><svg><use href="#i-folder"/></svg><svg class="f-ch"><use href="#i-up"/></svg><svg class="f-ch"><use href="#i-down"/></svg><svg><use href="#i-dup"/></svg><svg><use href="#i-merge"/></svg><svg><use href="#i-mask"/></svg><svg class="f-x"><use href="#i-x"/></svg>
        </div>
      </aside>
    </div>
  </div>
</div>

<div class="menu menu-main">
  <div class="mi"><svg class="mic"><use href="#i-gear"/></svg><span>Повторить «Размытие наездом камеры»</span><kbd>Ctrl+F</kbd></div>
  <div class="mi"><svg class="mic"><use href="#i-repeat"/></svg><span>Повторить с настройкой «Размытие наездом камеры»</span><kbd>Shift+Ctrl+F</kbd></div>
  <div class="mi sub"><i class="mic"></i><span>Недавно применявшиеся</span><svg class="chev"><use href="#i-chev"/></svg></div>
  <div class="mi"><svg class="mic"><use href="#i-reload"/></svg><span>Перезагрузить все фильтры</span></div>
  <hr class="ms ms1">
  <div class="mi sub mi-on"><i class="mic"></i><span>Размытие</span><svg class="chev"><use href="#i-chev"/></svg></div>
  <div class="mi sub"><i class="mic"></i><span>Улучшение</span><svg class="chev"><use href="#i-chev"/></svg></div>
  <div class="mi sub"><i class="mic"></i><span>Искажения</span><svg class="chev"><use href="#i-chev"/></svg></div>
  <div class="mi sub"><i class="mic"></i><span>Свет и тень</span><svg class="chev"><use href="#i-chev"/></svg></div>
  <div class="mi sub"><i class="mic"></i><span>Шум</span><svg class="chev"><use href="#i-chev"/></svg></div>
  <div class="mi sub"><i class="mic"></i><span>Выделение края</span><svg class="chev"><use href="#i-chev"/></svg></div>
  <div class="mi sub"><i class="mic"></i><span>Общие</span><svg class="chev"><use href="#i-chev"/></svg></div>
  <div class="mi sub"><i class="mic"></i><span>Объединение</span><svg class="chev"><use href="#i-chev"/></svg></div>
  <div class="mi sub"><i class="mic"></i><span>Имитация</span><svg class="chev"><use href="#i-chev"/></svg></div>
  <div class="mi sub"><i class="mic"></i><span>Декорация</span><svg class="chev"><use href="#i-chev"/></svg></div>
  <div class="mi sub"><i class="mic"></i><span>Проекция</span><svg class="chev"><use href="#i-chev"/></svg></div>
  <div class="mi sub"><i class="mic"></i><span>Визуализация</span><svg class="chev"><use href="#i-chev"/></svg></div>
  <div class="mi sub"><i class="mic"></i><span>Веб</span><svg class="chev"><use href="#i-chev"/></svg></div>
  <div class="mi sub"><i class="mic"></i><span>Анимация</span><svg class="chev"><use href="#i-chev"/></svg></div>
  <hr class="ms">
  <div class="mi sub"><i class="mic"></i><span>Python-Fu</span><svg class="chev"><use href="#i-chev"/></svg></div>
  <div class="mi sub"><i class="mic"></i><span>Script-Fu</span><svg class="chev"><use href="#i-chev"/></svg></div>
  <hr class="ms">
  <div class="mi"><svg class="mic"><use href="#i-gear"/></svg><span>Тренировка козы</span></div>
</div>

<div class="menu menu-sub">
  <div class="mi"><svg class="mic mic-g"><use href="#i-g"/></svg><span>Размытие расфокусировки...</span></div>
  <div class="mi"><svg class="mic mic-g"><use href="#i-g"/></svg><span>Гауссово размытие...</span></div>
  <div class="mi"><svg class="mic mic-g"><use href="#i-g"/></svg><span>Размытие оптики...</span></div>
  <div class="mi"><svg class="mic mic-g"><use href="#i-g"/></svg><span>Размытие по средней кривизне...</span></div>
  <div class="mi"><svg class="mic mic-g"><use href="#i-g"/></svg><span>Медианный фильтр...</span></div>
  <div class="mi"><svg class="mic mic-g"><use href="#i-g"/></svg><span>Пикселизация...</span></div>
  <div class="mi"><svg class="mic mic-g"><use href="#i-g"/></svg><span>Выборочное гауссово размытие...</span></div>
  <div class="mi"><svg class="mic mic-g"><use href="#i-g"/></svg><span>Переменное размытие...</span></div>
  <div class="mi"><svg class="mic mic-g"><use href="#i-g"/></svg><span>Размытие вращением камеры...</span></div>
  <div class="mi"><svg class="mic mic-g"><use href="#i-g"/></svg><span>Размытие проводкой камеры...</span></div>
  <div class="mi mi-on"><svg class="mic mic-g"><use href="#i-g"/></svg><span>Размытие наездом камеры...</span></div>
  <div class="mi"><svg class="mic"><use href="#i-gear"/></svg><span>Бесшовное размывание...</span></div>
</div>

<div class="tip">
  <div class="tip-a">Размывание наездом камеры</div>
  <div class="tip-b">Нажмите F1 для получения полной справки</div>
</div>
<script src="script.js"></script>
</body>
</html>
```
FILE: styles.css
```css
*{box-sizing:border-box}
html,body{margin:0;padding:0}
body{width:1920px;height:1080px;overflow:hidden;position:relative;font-family:"Noto Sans","Open Sans",sans-serif;font-size:11px;color:#333;background:#c5c8cd}
.defs{position:absolute;width:0;height:0;overflow:hidden}
ul{list-style:none;margin:0;padding:0}
p{margin:0}
.tool svg,.dock-foot svg,.dt svg,.rd-lock svg,.mic,.spin svg,.cb svg{fill:currentColor}

/* ---------- Word ---------- */
.word{display:flex;flex-direction:column;width:1920px;height:1080px}
.w-top{height:48px;flex:none;background:radial-gradient(70px 7px at 690px 0,rgba(168,58,140,.75),rgba(168,58,140,0)),linear-gradient(180deg,rgba(52,118,190,.95) 0,rgba(130,175,220,.55) 10px,rgba(255,255,255,0) 26px),linear-gradient(90deg,#f4f8fc 0,rgba(244,248,252,0) 12%),#f2f6fb}
.qat-row{height:24px;display:flex;align-items:flex-start;position:relative}
.qat{display:flex;align-items:center;height:22px;width:858px;padding-left:2px;flex:none}
.qi{height:16px;width:16px;flex:none}
.qi-w{height:18px;width:15px}
.qsep{width:1px;height:18px;background:#8a98a8;margin:0 0 0 4px}
.qi-save{margin-left:7px}
.qi-undo{margin-left:3px}
.qarr{width:0;height:0;border:3px solid transparent;border-top:4px solid #222;border-bottom:0;margin-left:7px}
.qi-redo{margin-left:5px}
.qi-print{margin-left:6px;width:18px;height:18px}
.qsep-2{margin-left:4px}
.qcustom{width:7px;height:7px;margin-left:4px;border-top:1px solid #222;position:relative}
.qcustom::after{content:"";position:absolute;left:0;top:2px;border:3.500px solid transparent;border-top:4px solid #222;border-bottom:0}
.w-title{font-size:11.600px;color:#1c1c1c;height:24px;line-height:24px;white-space:nowrap}
.w-ctrl{display:flex;margin-left:auto;height:18px;margin-right:2px;border:1px solid #8da2b6;border-top:0;border-radius:0 0 4px 4px;background:rgba(255,255,255,.25)}
.wc{display:flex;align-items:center;justify-content:center;border-right:1px solid #8da2b6;height:100%}
.wc-min{width:27px}.wc-max{width:26px}
.wc-close{width:48px;border:0;font-size:14px;font-weight:700;color:#556;text-shadow:0 0 2px #fff}
.wc-min i{width:11px;height:5px;border:1px solid #556;background:#dde;margin-top:5px}
.wc-max i{width:9px;height:11px;border:1px solid #556;background:#dde}
.tabs{display:flex;height:24px;align-items:center;font-size:10.900px;color:#3b3b3b;position:relative}
.tab-file{width:55px;height:23px;background:linear-gradient(#3f86cf,#1e5ca8);border-radius:3px 3px 0 0;color:#fff;text-align:center;line-height:23px;border:1px solid #2a5f9f;font-weight:500}
.tab-active{width:67px;height:25px;margin-left:5px;margin-top:1px;background:linear-gradient(#fff,#f4f5f7);border:1px solid #b6babf;border-bottom:0;border-radius:3px 3px 0 0;text-align:center;line-height:23px;position:relative;z-index:1}
.tab{white-space:nowrap}
.t1{margin-left:16px}.t2{margin-left:29px}.t3{margin-left:29px}.t4{margin-left:28px}.t5{margin-left:29px}.t6{margin-left:28px}
.tab-right{margin-left:auto;display:flex;align-items:center;gap:8px;margin-right:3px;margin-top:-1px}
.ribbon-up{width:10px;height:7px}
.help{width:17px;height:17px;border-radius:50%;background:radial-gradient(circle at 40% 30%,#8fb6e6,#2e64b0);color:#fff;font-weight:700;font-size:12px;text-align:center;line-height:17px}

.ribbon{display:flex;height:85px;flex:none;background:linear-gradient(#f7f8fa,#eff0f3 60%,#e4e6e9);border-top:1px solid #c7c9cc;border-bottom:2px solid #9ba0a6;filter:blur(.25px)}
.rg{display:flex;flex-direction:column;border-right:1px solid #cfd1d4;flex:none}
.rg-body{height:69px;flex:none}
.rg-label{height:15px;line-height:13px;font-size:11px;color:#666;text-align:center;position:relative;white-space:nowrap}
.lb-clip{padding-right:20px}.lb-font{padding-right:18px}.lb-para{padding-right:20px}
.launch{position:absolute;right:4px;top:3px;width:8px;height:8px}
.rg-clip{width:190px}.rg-font{width:269px}.rg-para{width:228px}.rg-styles{width:1094px}.rg-edit{width:95px}
.tri{display:inline-block;width:0;height:0;border:3px solid transparent;border-top:3.500px solid #666;border-bottom:0;flex:none}
.clip-body{display:flex}
.paste{width:60px;display:flex;flex-direction:column;align-items:center;padding-top:4px;font-size:11px;color:#444;flex:none}
.paste-i{width:26px;height:30px;margin-left:-1px;margin-bottom:4px}
.paste .tri{margin-top:6px}
.clip-list{padding-top:0}
.clip-list li,.edit-list li{display:flex;align-items:center;height:22px;white-space:nowrap;font-size:11px;color:#444}
.clip-list li.dis{color:#9a9a9a}
.ci{width:15px;height:16px;margin-right:3px;flex:none}
.two-rows{display:flex;flex-direction:column;padding:9px 0 0 5px}
.rrow{display:flex;align-items:center;height:22px;flex:none}
.font-r2{margin-top:5px;padding-left:1px}
.combo{height:22px;background:#fff;border:1px solid #d0d3d7;display:flex;align-items:center;font-size:11.200px;color:#222;padding-left:3px;justify-content:space-between;padding-right:4px;white-space:nowrap;overflow:hidden}
.combo span{overflow:hidden}
.combo-font{width:86px}
.combo-size{width:55px;margin-left:-1px}
.fbtn{font-family:"Liberation Serif",serif;font-weight:700;color:#222;width:22px;text-align:center;position:relative}
.fbtn.big{font-size:17px}
.fbtn.fb-grow{margin-left:2px}
.fbtn.sm{font-size:13px}
.up-t,.dn-t{position:absolute;right:1px;top:1px;border:2.500px solid transparent;border-bottom:3px solid #2d6cb5;border-top:0}
.dn-t{border-bottom:0;border-top:3px solid #2d6cb5}
.fbtn.aa{font-size:14px;width:32px}
.fbtn .tri{margin-left:2px;vertical-align:middle}
.vs{width:1px;height:20px;background:#d2d4d7;margin:0 5px;flex:none}
.clr{width:20px;height:18px;position:relative;margin-left:1px;border:1px solid #777;background:#fff;font:8px/12px "Liberation Sans",sans-serif;color:#333;padding-left:2px;flex:none}
.clr-e{position:absolute;right:-3px;bottom:-2px;width:10px;height:8px;background:#bcd1ea;border:1px solid #5a7ba3;transform:rotate(-35deg)}
.fs{width:22px;text-align:center;font-family:"Liberation Serif",serif;font-size:14px;font-weight:700;color:#222;flex:none;display:block;line-height:18px}
.fs small{font-size:7px;color:#2d6cb5}
.fs sup{font-size:7px;color:#2d6cb5;line-height:0}
.f-i{font-style:italic}
.f-u{text-decoration:underline;margin-left:3px}
.f-st{font-size:11px;text-decoration:line-through;margin-left:3px;color:#555}
.f-sb,.f-sp{margin-left:1px}
.font-r2 .tri{margin:0 2px}
.f-eff{font-family:"Liberation Sans",sans-serif;color:#a9c9ec;font-size:21px;-webkit-text-stroke:1px #4d86c4;margin-left:0;line-height:22px}
.vs2{margin:0 4px 0 5px}
.f-hl{height:21px;border-bottom:4px solid #ffff00;margin-left:1px;font-size:11px;line-height:15px}
.f-hl em{font-family:"Noto Sans",sans-serif;font-style:normal;color:#333;background:#f4e98c}
.f-col{height:21px;border-bottom:4px solid #f00;font-size:16px;line-height:16px;color:#1c3d78}
.ic17{width:18px;height:15px;flex:none}
.ic15{width:16px;height:14px;flex:none}
.para-r1 .tri{margin:0 4px 0 3px}
.para-r1 .tri + .ic17{margin-left:2px}
.para-r1{padding-left:3px}
.para-r1 .ic15 + .ic15{margin-left:3px}
.sort{width:28px;font-size:12px;display:flex;flex-wrap:wrap;font-family:"Liberation Sans",sans-serif;line-height:10px;position:relative;height:20px;flex:none}
.sort em{font-style:normal;font-weight:700;color:#2d6cb5;width:12px}
.sort .ya{color:#b03a2e;order:2}
.sort b{position:absolute;right:2px;top:3px}
.pilcrow{font-size:17px;color:#222;font-weight:400;font-family:"Liberation Sans",sans-serif;margin-left:3px}
.para-r2{margin-top:5px;padding-left:2px;gap:8px}
.para-r2 .tri{margin:0 0 0 -5px}
.para-r2 .vs{margin:0 -2px}
.aj-on{width:22px;height:22px;background:linear-gradient(#fde49a,#fbcf5d);border:1px solid #c79a3a;border-radius:3px;display:flex;align-items:center;justify-content:center;margin-left:2px}
.para-r2 .vs3{margin:0 -3px}

.styles-body{display:flex;padding:4px 0 0 6px}
.gallery{display:flex;width:1024px;height:60px;background:#fff;border:1px solid #c9ccd0;position:relative;flex:none;border-radius:2px}
.st{width:72px;display:flex;flex-direction:column;align-items:center;padding-top:13px;overflow:hidden;flex:none}
.st-on{background:#fff;border:3px solid #f8d978;outline:1px solid #c8a94e;border-radius:2px;padding-top:10px;height:55px;margin:1px 0 0 1px;width:70px}
.sv{height:18px;line-height:18px;font-size:12.500px;color:#111;white-space:nowrap;overflow:hidden;width:66px;text-align:center}
.sl{font-size:11.200px;color:#555;white-space:nowrap;margin-top:5px;line-height:16px}
.sv-h1{font-size:16px;color:#2c5a9e;font-weight:600;text-align:left;padding-left:6px}
.sv-h2{font-size:14px;color:#4573b8;font-weight:600}
.sv-t{font-size:30px;font-weight:300;color:#4a5360;height:26px;line-height:26px;margin-top:-8px;margin-bottom:0;text-align:left}
.sv-sub{font-size:13px;font-style:italic;color:#6d8fd1;letter-spacing:.6px}
.sv-wk{font-style:italic;color:#8a8a8a}
.sv-em{font-style:italic;color:#111}
.sv-str{font-style:italic;font-weight:700;color:#4c7bc4}
.sv-bold{font-weight:700;color:#111}
.sv-int{font-style:italic;font-weight:700;color:#4c7bc4;border-bottom:1px solid #4c7bc4;line-height:16px}
.sv-ref{font-size:12px;color:#ee8a3d;text-decoration:underline}
.sv-ref2{font-size:12px;color:#ee7a2d;text-decoration:underline;font-weight:700}
.gscroll{position:absolute;right:0;top:0;width:14px;height:100%;display:flex;flex-direction:column;border-left:1px solid #d5d7da}
.gscroll span{flex:1;display:flex;align-items:center;justify-content:center;border-bottom:1px solid #d5d7da;background:linear-gradient(#fafbfc,#eceef0)}
.tri-up{transform:rotate(180deg);border-top-color:#aaa}
.tri-more{box-shadow:0 -3px 0 -1.500px #666}
.chg{width:62px;display:flex;flex-direction:column;align-items:center;font-size:11px;color:#444;padding-top:1px;line-height:16px;white-space:nowrap;flex:none}
.chg-i{width:37px;height:36px;margin-bottom:2px}
.chg .tri{vertical-align:middle}
.rg-label-styles{padding-right:18px}
.edit-list{padding:0 0 0 9px}
.abac{width:15px;margin-right:3px;font-size:9px;line-height:8px;display:flex;flex-direction:column;font-family:"Liberation Sans",sans-serif;flex:none}
.abac em{font-style:normal;color:#555}
.abac .ac{color:#2f8b3a;font-weight:700;margin-left:5px}
.edit-list .tri{margin-left:4px}

/* document */
.doc{flex:1;min-height:0;display:flex;background:linear-gradient(180deg,#cdd0d4,#bcbfc4);overflow:hidden}
.doc-left{width:487px;flex:none;position:relative;display:flex;flex-direction:column}
.corner{width:25px;height:24px;margin-top:3px;border:1px solid #8b9096;padding:3px 4px;flex:none}
.corner span{display:flex;align-items:flex-end;justify-content:center;height:100%;background:#e8eaec;border:1px solid #777;font:700 9px "Liberation Sans",sans-serif;color:#444;line-height:12px}
.vruler-w{width:14px;margin:260px 0 0 5px;border:1px solid #90959b;border-bottom:0;flex:1;display:flex;flex-direction:column;min-height:0}
.vr-gray{height:37px;background:#c6c9ce;flex:none;border-bottom:1px solid #90959b}
.vr-white{flex:1;background:#fff repeating-linear-gradient(180deg,transparent 0 10px,#777 10px 11px) center/5px 100% no-repeat;display:flex;flex-direction:column;padding-top:38px;overflow:hidden}
.vr-white span{height:10px;flex:none;font-size:8px;color:#555;text-align:center;line-height:10px;margin:0 0 35px;background:#fff}
.doc-pages{width:953px;flex:none;display:flex;flex-direction:column;overflow:hidden}
.hruler-w{width:76px;height:14px;margin:9px 0 0 0;background:#d2d4d8;border:1px solid #8f949a;font-size:9px;text-align:left;padding-left:10px;line-height:12px;color:#555;flex:none}
.page{background:#fff;box-shadow:0 0 7px rgba(60,60,60,.55);width:100%;flex:none;overflow:hidden}
.page1{height:242px;margin-top:5px;position:relative}
.page2{height:620px;margin-top:18px;padding-top:29px}
.letter{font:17.500px/31px "Liberation Serif",serif;color:#111;margin-left:59px;height:31px}
.clipped{margin-top:-22px}
.doc-shot{width:80px;height:152px;background:#3f3f3f;margin:11px 0 0 63px}
.l5{margin-top:302px}
.dlg{width:324px;height:170px;margin:6px 0 0 61px;background:#e3e1e6;border:1px solid #7d8794;border-width:1px 2px 0;border-radius:5px 5px 0 0;padding:0 4px 0;overflow:hidden}
.dlg-head{height:31px;margin:0 -4px;padding:7px 0 0 6px;background:linear-gradient(#c9ccd2,#eceaee);border-bottom:1px solid #9aa0a8}
.dlg-wilber{display:block;width:14px;height:16px;background:#4a4a4a;border-radius:50% 50% 40% 40%;box-shadow:inset 0 -4px 0 #8a6b3d}
.dlg-tool{width:12px;height:38px;margin:5px 0 0 2px;display:flex;flex-direction:column;gap:5px;background:#f2f2f2;border:1px solid #7b7b7b;padding:3px 1px}
.dlg-tool i{height:5px;background:#6a6a6a}
.dlg-tool i:first-child{background:#b23a2e}
.dlg-row{display:flex;align-items:center;height:20px;margin-top:13px}
.dlg-lbl{font:11.500px "Liberation Sans",sans-serif;color:#222;width:79px;letter-spacing:-.35px;white-space:nowrap;flex:none}
.dlg-combo{width:187px;height:20px;background:#fff;border:1px solid #a9b0ba;display:flex;justify-content:flex-end;flex:none}
.dlg-combo b{width:15px;background:#d3d7de;text-align:center;line-height:11px;font-size:13px;color:#222}
.dlg-plus{color:#3a74b4;font-size:13px;margin-left:9px}
.dlg-pin{margin-left:7px;width:11px;height:14px;background:#eee;border:1px solid #777;font-size:9px;line-height:11px;text-align:center}
.dlg-h{font:700 12px "Liberation Sans",sans-serif;color:#111;margin-top:11px;letter-spacing:-.7px;line-height:14px;white-space:nowrap}
.dlg-radio{display:flex;align-items:center;font:11.500px "Liberation Sans",sans-serif;margin:13px 0 0 15px;letter-spacing:-.3px;color:#222;line-height:14px}
.dlg-radio i{width:12px;height:14px;border:1px solid #607da0;border-radius:50%;background:#fff;margin-right:4px}
.doc-scroll{margin-left:auto;width:17px;flex:none;background:#dfe3ea;display:flex;flex-direction:column;align-items:center;border-left:1px solid #cfd3d9;position:relative}
.ds-grip{width:14px;height:15px;margin-top:11px;flex:none}
.ds-up{margin-top:4px;border:5px solid transparent;border-bottom:5px solid #555;border-top:0}
.ds-track{flex:1;width:100%;padding-top:77px}
.ds-thumb{display:block;width:14px;height:23px;margin:0 auto;background:linear-gradient(90deg,#eef1f5,#d4dae3);border:1px solid #9aa3af}
.ds-down{border:5px solid transparent;border-top:5px solid #555;border-bottom:0;margin-bottom:2px}
.ds-nav{height:55px;width:100%;border-top:1px solid #c8ccd2;display:flex;flex-direction:column;align-items:center;padding-top:8px;flex:none;gap:7px}
.ds-nav svg{width:10px;height:10px;flex:none}
.ds-o{width:8px;height:8px;border:1px solid #555;border-radius:50%;flex:none}

.status{height:22px;flex:none;display:flex;align-items:center;background:linear-gradient(#f3f4f6,#dcdee1 50%,#cfd1d5);border-top:1px solid #8f959c;font-size:11px;color:#555;filter:blur(.2px)}
.status>span{height:100%;display:flex;align-items:center;border-right:1px solid #b5b8bc;white-space:nowrap}
.s1{width:111px;padding-left:8px}.s2{width:111px;padding-left:10px}
.status>.s3{width:42px;justify-content:center;border-right:0}
.proof{width:18px;height:18px}
.s4{width:51px}
.status>.s-right{margin-left:auto;border:0;border-left:1px solid #b5b8bc;padding-left:4px;padding-right:3px}
.vw{width:18px;height:19px;display:flex;align-items:center;justify-content:center;flex:none}
.vw-on{background:linear-gradient(#fde49a,#fbcf5d);border:1px solid #c79a3a;border-radius:2px}
.vwi{width:14px;height:14px}
.zoom-pc{margin-left:11px;width:35px;color:#333;font-size:11.500px}
.zb{width:16px;height:16px;border-radius:50%;border:1px solid #8a8f95;background:#f4f5f7;display:flex;align-items:center;justify-content:center;font-weight:700;font-size:14px;line-height:14px;color:#555;flex:none}
.zslider{width:101px;height:1px;background:#a1a6ad;position:relative}
.zslider i{position:absolute;left:47px;top:-6px;width:9px;height:13px;background:#fff;border:1px solid #888;border-radius:1px 1px 4px 4px}

.taskbar{height:40px;flex:none;display:flex;align-items:center;padding-left:8px;position:relative;background:linear-gradient(90deg,#3d9ad4 0,#3f9dd5 28%,#2f82c3 40%,#1f62aa 55%,#1f5fa7 80%,#1c4a82 92%,#142f58);border-top:1px solid #0f2946;box-shadow:inset 0 1px 0 rgba(255,255,255,.25)}
.orb{width:37px;height:37px;border-radius:50%;background:radial-gradient(circle at 50% 35%,#5fb4e6,#135a99 60%,#06274b);border:1px solid #0d3357;display:flex;align-items:center;justify-content:center;box-shadow:0 0 2px #a9dcff;flex:none}
.flag{width:18px;height:16px;display:grid;grid-template-columns:1fr 1fr;gap:1px;transform:skewY(-6deg)}
.flag i:nth-child(1){background:#e8542e}.flag i:nth-child(2){background:#7bb93f}.flag i:nth-child(3){background:#2f8ee0}.flag i:nth-child(4){background:#f2c029}
.tk{flex:none}
.tk-media{width:28px;height:32px;margin-left:29px}
.tk-print{width:34px;height:36px;margin-left:30px}
.tk-calc{width:24px;height:34px;margin-left:35px}
.tbtn{height:38px;flex:none;display:flex;align-items:center;justify-content:center;border:1px solid rgba(220,240,255,.55);border-radius:3px;background:linear-gradient(rgba(255,255,255,.45),rgba(255,255,255,.18) 50%,rgba(255,255,255,.12));box-shadow:0 0 0 1px rgba(10,30,60,.3)}
.b-chrome{width:60px;margin-left:20px}
.b-word{width:51px;margin-left:2px}
.tgap{width:1px;height:34px;background:rgba(255,255,255,.25);margin:0 5px;box-shadow:1px 0 0 rgba(0,0,0,.2)}
.tgap2{margin:0 4px}
.b-db{width:58px}.b-xl{width:58px;margin-left:4px}.b-fold{width:54px;margin-left:4px}
.b-7z{width:58px}.b-gimp{width:58px;margin-left:4px;background:linear-gradient(rgba(255,255,255,.75),rgba(255,255,255,.4))}
.tk-in{width:32px;height:32px}
.doc-ico{width:28px;height:33px;background:#fff;border:2px solid #1d4fa0;display:flex;align-items:center;justify-content:center;font:700 22px "Liberation Serif",serif;color:#1d4fa0}
.doc-ico.xl{border-color:#2a7b3a;color:#2a7b3a;background:linear-gradient(135deg,#fff,#cde5c5)}
.cyl{display:flex;flex-direction:column;gap:2px;width:24px}
.cyl i{height:9px;border-radius:6px/4px;background:linear-gradient(90deg,#777,#ddd 45%,#666)}
.z7{width:32px;height:32px;background:#000;border:3px solid #fff;outline:1px solid #000;color:#fff;font:700 21px/26px "Liberation Sans",sans-serif;text-align:center}
.tray{margin-left:auto;display:flex;align-items:center;height:100%;color:#fff;padding-right:1px}
.t-en{font-size:12px;margin-right:15px;margin-top:-7px}
.t-arr{border:5px solid transparent;border-bottom:4px solid #fff;border-top:0;margin-right:11px}
.t-net{width:17px;height:17px;margin-right:9px}
.t-vol{width:14px;height:15px;margin-right:10px}
.t-clock{display:flex;flex-direction:column;align-items:center;line-height:17px;font-size:11.500px;width:66px;margin-right:9px}
.t-clock b{font-weight:400}
.t-show{width:13px;height:37px;border:1px solid rgba(255,255,255,.4);background:linear-gradient(rgba(255,255,255,.3),rgba(255,255,255,.05))}

/* ---------- GIMP window ---------- */
.gimp{position:absolute;left:562px;top:131px;width:1049px;height:806px;padding:0 5px 8px 6px;border:1px solid #141a22;border-radius:6px 6px 4px 4px;background:linear-gradient(180deg,#b5cade 0,#9fbad6 40px,#a6c3e0),#a6c3e0;box-shadow:0 3px 16px 3px rgba(0,0,0,.62);color:#ddd;font-size:11.300px;display:flex;flex-direction:column}
.g-title{height:28px;padding-bottom:2px;display:flex;align-items:center;color:#161616;font-size:11.500px;white-space:nowrap;flex:none;position:relative;background:linear-gradient(90deg,rgba(255,255,255,0),rgba(255,255,255,.28) 30%,rgba(90,120,150,.25) 60%,rgba(255,255,255,.1))}
.thumb{display:block;background:#fff}
.thumb-title{width:16px;height:14px;margin-right:6px}
.g-title-t{overflow:hidden}
.g-ctrl{margin-left:auto;display:flex;height:20px;align-self:flex-start;border:1px solid #566a7c;border-top:0;border-radius:0 0 4px 4px;overflow:hidden;margin-right:1px}
.gc{width:28px;display:flex;align-items:center;justify-content:center;border-right:1px solid #566a7c;background:linear-gradient(rgba(255,255,255,.45),rgba(255,255,255,.12))}
.gc-min{width:12px;height:5px;border:1px solid #556;background:#e4e8ec;margin-top:6px}
.gc-max{width:11px;height:9px;border:1px solid #445;background:transparent;box-shadow:inset 0 0 0 2px #e4e8ec}
.gc-x{width:46px;border:0;background:linear-gradient(#e08a78,#c43c2a 50%,#b6402c);color:#fff;font-size:13px;font-weight:700}
.g-inner{flex:1;min-height:0;background:#474747;display:flex;flex-direction:column;border:1px solid #3a3a3a;border-width:1px 0 0}
.g-menubar{height:26px;flex:none;display:flex;align-items:center;color:#dcdcdc;padding-left:3px;font-size:11.300px}
.g-menubar span{padding:0 5px;height:100%;line-height:26px;margin-right:1.700px;white-space:nowrap}
.g-menubar .m-on{background:#131313;width:61px;padding:0 5px;color:#eee;margin-right:1px}
.g-body{flex:1;min-height:0;display:flex}
.g-left{width:192px;flex:none;display:flex;flex-direction:column;border-right:1px solid #3b3b3b}
.toolbox{height:142px;flex:none;position:relative;overflow:hidden}
.wilber{position:absolute;left:10px;top:-12px;width:168px;height:32px;display:flex;opacity:.6}
.wilber i{display:block;background:#5d5d5d}
.w1{width:44px;height:44px;border-radius:50%;border:9px solid #5d5d5d;background:transparent!important}
.w2{width:36px;height:36px;border-radius:50%;margin:6px 0 0 4px;border:9px solid #5d5d5d;background:#5d5d5d}
.w3{width:38px;height:38px;border-radius:50%;margin:5px 0 0 8px}
.w4{width:36px;height:32px;transform:skewX(-8deg)}
.tools{display:grid;grid-template-columns:repeat(7,26px);grid-auto-rows:24px;padding:20px 0 0 1px;position:relative;color:#b9b9b9}
.tool{position:relative;display:flex;align-items:center;justify-content:center}
.tool svg{width:16px;height:16px}
.tool::after{content:"";position:absolute;right:2px;bottom:2px;border:0 solid transparent;border-width:0 0 3px 3px;border-bottom-color:#ccc;border-left-color:transparent}
.notri::after{display:none}
.tool-a{font:700 19px "Liberation Sans",sans-serif;color:#bbb}
.swatches{position:absolute;left:76px;top:97px;width:46px;height:44px}
.sw-fg{position:absolute;left:0;top:0;width:23px;height:23px;background:#000;border:1px solid #fff;outline:1px solid #000}
.sw-bg{position:absolute;left:16px;top:14px;width:23px;height:23px;background:#fff;outline:1px solid #000}
.sw-d1{position:absolute;left:0;top:25px;width:7px;height:7px;background:#000;outline:1px solid #bbb}
.sw-d2{position:absolute;left:5px;top:30px;width:7px;height:7px;background:#fff;outline:1px solid #222}
.sw-swap{position:absolute;left:27px;top:0;width:12px;height:12px}
.dock-tabs{height:22px;flex:none;display:flex;align-items:flex-end;padding-left:2px;border-bottom:1px solid #5b5b5b;position:relative;color:#bbb}
.dt{width:19px;height:21px;background:#333;display:flex;align-items:center;justify-content:center;flex:none;border-right:1px solid #222}
.dt svg{width:14px;height:14px}
.dt-on{background:#474747;border:1px solid #5b5b5b;border-bottom:0;height:22px;width:20px}
.thumb-tab{width:14px;height:14px;border:1px solid #000}
.dt-pin{width:11px;height:11px;position:absolute;right:3px;top:5px}
.gegl{flex:1;min-height:0;padding:1px 2px 0 2px;border:1px solid #565656;border-width:0 1px 0 0;margin-right:2px;background:#424242}
.gegl-h{font-weight:700;font-size:11.500px;color:#cfcfcf;height:14px;line-height:16px}
.gegl-chk{display:flex;align-items:center;color:#8e8e8e;font-size:10.700px;height:17px;background:#474747}
.gegl-chk i{width:13px;height:13px;background:#111;color:#fff;font-style:normal;font-weight:700;font-size:10px;line-height:13px;text-align:center;border-radius:2px;margin:0 6px 0 2px}
.gegl-field{display:flex;align-items:center;height:17px;margin:3px 0 0 12px;background:#333;border:1px solid #8a8a8a;color:#d8d8d8;padding-left:1px;font-size:11px;width:170px}
.gv{margin-left:auto;margin-right:4px}
.spin{display:flex;flex-direction:column;width:10px;gap:2px;margin-right:1px}
.spin svg{width:8px;height:5px;color:#ccc;display:block}
.gc2{margin-top:6px}
.dock-foot{height:25px;flex:none;display:flex;align-items:center;color:#b5b5b5}
.dock-foot svg{width:14px;height:14px;flex:none}
.df-left{gap:31px;padding-left:19px}
.g-center{width:641px;flex:none;display:flex;flex-direction:column}
.img-tabs{height:43px;flex:none;border-bottom:1px solid #555}
.img-tab{width:83px;height:43px;border:1px solid #555;border-width:0 1px 1px 0;display:flex;align-items:center;padding:0 4px;background:#474747}
.thumb-img{width:48px;height:32px}
.img-x{width:12px;height:12px;margin-left:12px}
.hruler{height:16px;flex:none;display:flex;align-items:flex-end}
.origin{width:12px;height:12px;border:1px solid #999;background:#555;margin:0 6px 3px 4px;flex:none;position:relative}
.origin::after{content:"";position:absolute;left:3px;top:1px;border:4px solid transparent;border-left:5px solid #ddd;border-right:0}
.hr-cells{display:flex;height:15px;border-bottom:1px solid #d6d6d6;flex:1;overflow:hidden;background:repeating-linear-gradient(90deg,#c8c8c8 0 1px,transparent 1px 20px) 0 100%/100% 4px no-repeat}
.hr-cells span{width:100px;flex:none;border-left:1px solid #c8c8c8;padding-left:2px;font-size:9.500px;line-height:11px;color:#c8c8c8}
.mid{height:635px;flex:none;display:flex}
.vruler{width:18px;flex:none;border-right:1px solid #d6d6d6;overflow:hidden;background:repeating-linear-gradient(180deg,#c8c8c8 0 1px,transparent 1px 20px) 100% 17px/4px 100% no-repeat}
.vr-cell{height:100px;border-top:1px solid #c8c8c8;display:flex;flex-direction:column;align-items:center;width:14px;padding-top:1px;padding-left:2px;font-size:9.500px;line-height:9px;color:#c8c8c8}
.vr-neg{height:117px;padding-top:23px;border-top:0}
.vr-end{height:50px}
.viewport{width:602px;flex:none;padding-top:117px;overflow:hidden;position:relative}
.ants{width:601px;height:401px;border:1px solid #ff0;outline:1px dashed #000;outline-offset:-1px;background:#fff;overflow:hidden}
#blur{display:block;width:600px;height:400px}
.vbar{width:14px;height:633px;flex:none;background:#5a5a5a;border:1px solid #2b2b2b}
.hbar{height:15px;flex:none;display:flex;align-items:center;padding-left:5px}
.corner-q{width:12px;height:11px;background:#6a6a6a;border:1px dotted #999;flex:none}
.hbar-t{width:603px;height:15px;margin-left:3px;background:#5a5a5a;border:1px solid #2b2b2b;border-radius:1px;flex:none}
.nav-tri{width:12px;height:13px;fill:#c7c7c7;margin-left:1px;flex:none}
.g-status{flex:1;display:flex;align-items:center;padding:0 0 0 74px;min-height:0}
.cb{height:25px;background:#2e2e2e;border:1px solid #1d1d1d;border-radius:4px;display:flex;align-items:center;color:#c5c5c5;font-size:11px;flex:none}
.cb svg{width:12px;height:7px;color:#eee}
.cb-px{width:44px;padding-left:6px;gap:8px}
.cb-zoom{width:34px;height:25px;margin-left:3px;background:#3c3c3c;display:flex;align-items:center;flex:none}
.cb-zoom b{background:#232323;font-weight:400;font-size:10.500px;color:#cfcfcf;padding:0 1px 0 2px;line-height:15px;white-space:nowrap}
.cb-z{width:17px;justify-content:center;margin-left:1px}
.g-msg{margin-left:3px;color:#cfcfcf;font-size:11.100px;white-space:nowrap}
.g-right{width:203px;flex:none;display:flex;flex-direction:column;border-left:2px solid #3a3a3a;box-shadow:inset 1px 0 0 #555;padding:0 3px 0 2px;position:relative;font-size:11px}
.rd-tabs{height:25px;flex:none;position:relative;display:flex;align-items:center;padding-left:50px}
.rd-tab{width:10px;height:16px;background:#fff;color:#444;font-size:11px;line-height:15px;text-align:center}
.rd-help{width:15px;height:15px;border:2px solid #aaa;border-radius:50%;margin-left:1px;color:#bbb;font-size:10px;font-weight:700;line-height:11px;text-align:center}
.rd-tabs .dt-pin{right:0;top:6px}
.rd-filter{height:19px;flex:none;background:#3d3d3d;display:flex;align-items:center;justify-content:space-between;padding:0 6px 0 34px;color:#777;margin-top:1px}
.rd-filter svg{width:13px;height:8px;color:#ddd}
.rd-name{height:16px;flex:none;color:#c5c5c5;line-height:16px;padding-left:20px;white-space:nowrap;font-size:12px}
.rd-brushes{height:327px;flex:none;display:flex}
.brush-grid{width:170px;height:100%;background:#fff;position:relative;flex:none;overflow:hidden}
.br-dot{position:absolute;left:83px;top:14px;width:3px;height:3px;background:#222}
.br-bar{position:absolute;left:106px;top:13px;width:30px;height:8px;background:#000}
.br-ell{position:absolute;left:141px;top:10px;width:28px;height:13px;border-radius:50%;background:radial-gradient(closest-side,#000 50%,#fff)}
.br-sel{position:absolute;left:70px;top:34px;width:34px;height:34px;border:1px solid #000;background:radial-gradient(closest-side,#555,#fff)}
.br-mid{position:absolute;left:108px;top:35px;width:36px;height:36px;border-radius:50%;background:radial-gradient(closest-side,#000 40%,#fff)}
.br-big{position:absolute;left:134px;top:34px;width:36px;height:36px;border-radius:50%;background:#000}
.br-p1{position:absolute;left:131px;top:26px;width:6px;height:6px}
.br-p2{position:absolute;left:164px;top:26px;width:6px;height:6px}
.brush-sb{width:15px;margin-left:12px;background:#555;border:1px solid #2b2b2b;flex:none}
.rd-op{height:21px;flex:none;display:flex;align-items:center}
.op-bar{width:197px;height:18px;background:#4e4e4e;border:1px solid #777;display:flex;align-items:center;color:#d0d0d0;padding-left:4px}
.op-v{margin-left:auto;margin-right:5px}
.rd-lock{height:21px;flex:none;display:flex;align-items:center;color:#c8c8c8}
.rd-lock svg{width:13px;height:13px;margin-left:11px;color:#bbb}
.rd-layers{flex:1;min-height:0;background:#333;width:197px}
.layer{height:28px;background:#1f1f1f;display:flex;align-items:center;padding-left:74px;margin-top:1px}
.thumb-layer{width:36px;height:25px;margin-right:4px}
.layer b{font-size:11px;color:#ddd}
.df-right{padding-left:3px;gap:10px}
.f-ch{height:8px!important;color:#c0c0c0}
.f-x{margin-left:3px}

/* ---------- menus & tooltip ---------- */
.menu{position:absolute;background:#474747;border:1px solid #5b5b5b;color:#e0e0e0;font-size:11.300px;box-shadow:2px 3px 6px rgba(0,0,0,.55);z-index:3}
.menu-main{left:1022px;top:187px;width:432px;padding:1px 1px 3px}
.menu-sub{left:1452px;top:294px;width:257px;padding:2px 1px 4px;z-index:4}
.mi{height:23px;display:flex;align-items:center;padding-right:7px;white-space:nowrap}
.mic{width:18px;height:14px;display:block;flex:none;margin:0 6px 0 2px;color:#9b9b9b;padding-left:3px}
.menu-sub .mic{margin-left:2px;margin-right:6px}
.mic-g{color:#aaa}
.mi kbd{margin-left:auto;font:inherit;margin-right:2px}
.chev{width:8px;height:14px;margin-left:auto;color:#ddd}
.mi-on{background:#131313;color:#eee}
.ms{border:0;height:1px;background:#1d1d1d;margin:7px 6px 8px}
.ms1{margin:7px 6px 8px}
.tip{position:absolute;left:1653px;top:554px;width:226px;height:49px;background:#3a3a3a;border:1px solid #1e1e1e;box-shadow:3px 0 0 -1px #222,1px 1px 3px rgba(0,0,0,.5);color:#cfcfcf;z-index:5;padding:3px 3px;overflow:hidden}
.tip-a{font-size:11.500px;letter-spacing:.55px;line-height:18px;white-space:nowrap}
.tip-b{font-size:10.800px;font-style:italic;margin-top:8px;line-height:15px;white-space:nowrap}
```
FILE: script.js
```js
(function () {
  var seed = 20210201;
  function rnd() {
    seed |= 0; seed = seed + 0x6D2B79F5 | 0;
    var t = Math.imul(seed ^ seed >>> 15, 1 | seed);
    t = t + Math.imul(t ^ t >>> 7, 61 | t) ^ t;
    return ((t ^ t >>> 14) >>> 0) / 4294967296;
  }
  var cv = document.getElementById('blur');
  var c = cv.getContext('2d');
  c.fillStyle = '#fff';
  c.fillRect(0, 0, 600, 400);
  var cx = 300, cy = 200;

  function streak(x, y, len, w, a, lens) {
    var dx = x - cx, dy = y - cy, r = Math.hypot(dx, dy) || 1;
    var ux = dx / r, uy = dy / r, px = -uy, py = ux;
    c.fillStyle = 'rgba(0,0,0,' + a + ')';
    c.beginPath();
    if (lens) {
      c.moveTo(x - ux * len / 2, y - uy * len / 2);
      c.quadraticCurveTo(x + px * w, y + py * w, x + ux * len / 2, y + uy * len / 2);
      c.quadraticCurveTo(x - px * w, y - py * w, x - ux * len / 2, y - uy * len / 2);
    } else {
      var sk = len * 0.12;
      c.moveTo(x - ux * len / 2 + px * w, y - uy * len / 2 + py * w);
      c.lineTo(x + ux * len / 2 + px * w + sk * ux, y + uy * len / 2 + py * w + sk * uy);
      c.lineTo(x + ux * len / 2 - px * w, y + uy * len / 2 - py * w);
      c.lineTo(x - ux * len / 2 - px * w - sk * ux, y - uy * len / 2 - py * w - sk * uy);
    }
    c.closePath();
    c.fill();
  }

  var i, x, y, r, nb;
  // pale outer patches
  for (i = 0; i < 520; i++) {
    x = rnd() * 600; y = rnd() * 400;
    r = Math.hypot(x - cx, y - cy);
    if (Math.abs(y - cy) < 55) continue;
    streak(x, y, 12 + r * (0.06 + rnd() * 0.08), 2 + r * 0.014 * rnd(), 0.016 + rnd() * 0.026, false);
  }
  // soft mid streaks
  c.filter = 'blur(.8px)';
  for (i = 0; i < 360; i++) {
    x = rnd() * 600; y = rnd() * 400;
    r = Math.hypot(x - cx, y - cy);
    nb = Math.abs(y - cy);
    if (nb < 22 || (nb > 58 && nb < 72)) continue;
    var d = nb < 105 ? 0.1 + rnd() * 0.22 : 0.03 + rnd() * 0.09;
    streak(x, y, 16 + r * (0.06 + rnd() * 0.12), 0.8 + r * 0.006 * rnd(), d, true);
  }
  // gray bands around y=96 and y=316
  for (i = 0; i < 90; i++) {
    x = rnd() * 290;
    streak(x, 88 + rnd() * 20, 30 + rnd() * 50, 0.8 + rnd() * 1.8, 0.05 + rnd() * 0.14, true);
    streak(x, 306 + rnd() * 14, 30 + rnd() * 50, 1 + rnd() * 2, 0.03 + rnd() * 0.09, true);
  }
  c.filter = 'none';
  // thin dark streaks near the centre line
  for (i = 0; i < 320; i++) {
    x = 60 + rnd() * 480; y = cy + (rnd() - 0.5) * 90;
    var a = Math.max(0.12, 0.95 - Math.abs(y - cy) / 36) * (0.4 + rnd() * 0.6) * (x > 130 ? 1 : 0.5);
    streak(x, y, 8 + rnd() * 26, 0.4 + rnd() * 0.9, a, true);
  }
  // black centre line
  for (x = 70; x < 540; x += 4 + rnd() * 16) {
    streak(x, 200.01, 6 + rnd() * 18, 0.7, (x > 140 ? 0.55 : 0.2) + rnd() * 0.4, true);
  }

  var thumbs = document.querySelectorAll('canvas.thumb');
  for (i = 0; i < thumbs.length; i++) {
    var t = thumbs[i];
    t.getContext('2d').drawImage(cv, 0, 0, t.width, t.height);
  }
})();
```
